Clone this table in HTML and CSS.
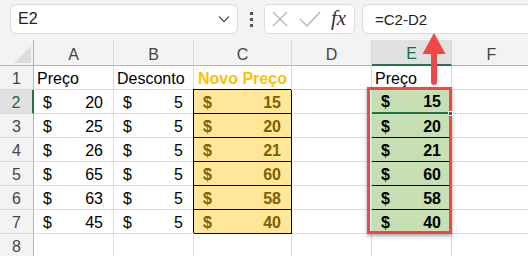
FILE: index.html
```html
<!DOCTYPE html>
<html>
<head>
<meta charset="utf-8">
<link rel="stylesheet" href="styles.css">
</head>
<body>
<div class="app">
  <div class="toolbar">
    <div class="namebox">
      <span>E2</span>
      <svg class="chev" width="12" height="8" viewBox="0 0 12 8"><path d="M1 1.5 L6 6.5 L11 1.5" fill="none" stroke="#555" stroke-width="1.3"/></svg>
    </div>
    <div class="dots"><i></i><i></i><i></i></div>
    <div class="fbtns">
      <svg width="16" height="16" viewBox="0 0 16 16"><path d="M1 1 L15 15 M15 1 L1 15" stroke="#b4b4b4" stroke-width="1.3" fill="none"/></svg>
      <svg width="22" height="16" viewBox="0 0 22 16"><path d="M1 8 L8 15 L21 1" stroke="#b4b4b4" stroke-width="1.3" fill="none"/></svg>
      <span class="fx">fx</span>
    </div>
    <div class="finput">=C2-D2</div>
  </div>

  <div class="sheet">
    <div class="ch corner"><svg width="17" height="17" viewBox="0 0 17 17"><polygon points="17,0 17,17 0,17" fill="#dcdcdc"/></svg></div>
    <div class="ch">A</div>
    <div class="ch">B</div>
    <div class="ch">C</div>
    <div class="ch">D</div>
    <div class="ch sel">E</div>
    <div class="ch">F</div>

    <div class="rh">1</div>
    <div class="c">Preço</div>
    <div class="c">Desconto</div>
    <div class="c hdr-y">Novo Preço</div>
    <div class="c"></div>
    <div class="c">Preço</div>
    <div class="c"></div>

    <div class="rh sel">2</div>
    <div class="c acc"><span>$</span><span>20</span></div>
    <div class="c acc"><span>$</span><span>5</span></div>
    <div class="c acc yel"><span>$</span><span>15</span></div>
    <div class="c"></div>
    <div class="c acc grn active"><span>$</span><span>15</span></div>
    <div class="c"></div>

    <div class="rh">3</div>
    <div class="c acc"><span>$</span><span>25</span></div>
    <div class="c acc"><span>$</span><span>5</span></div>
    <div class="c acc yel"><span>$</span><span>20</span></div>
    <div class="c"></div>
    <div class="c acc grn"><span>$</span><span>20</span></div>
    <div class="c"></div>

    <div class="rh">4</div>
    <div class="c acc"><span>$</span><span>26</span></div>
    <div class="c acc"><span>$</span><span>5</span></div>
    <div class="c acc yel"><span>$</span><span>21</span></div>
    <div class="c"></div>
    <div class="c acc grn"><span>$</span><span>21</span></div>
    <div class="c"></div>

    <div class="rh">5</div>
    <div class="c acc"><span>$</span><span>65</span></div>
    <div class="c acc"><span>$</span><span>5</span></div>
    <div class="c acc yel"><span>$</span><span>60</span></div>
    <div class="c"></div>
    <div class="c acc grn"><span>$</span><span>60</span></div>
    <div class="c"></div>

    <div class="rh">6</div>
    <div class="c acc"><span>$</span><span>63</span></div>
    <div class="c acc"><span>$</span><span>5</span></div>
    <div class="c acc yel"><span>$</span><span>58</span></div>
    <div class="c"></div>
    <div class="c acc grn"><span>$</span><span>58</span></div>
    <div class="c"></div>

    <div class="rh">7</div>
    <div class="c acc"><span>$</span><span>45</span></div>
    <div class="c acc"><span>$</span><span>5</span></div>
    <div class="c acc yel"><span>$</span><span>40</span></div>
    <div class="c"></div>
    <div class="c acc grn"><span>$</span><span>40</span></div>
    <div class="c"></div>

    <div class="rh">8</div>
    <div class="c"></div>
    <div class="c"></div>
    <div class="c"></div>
    <div class="c"></div>
    <div class="c"></div>
    <div class="c"></div>
  </div>

  <div class="redbox"></div>
  <div class="handle"></div>
  <svg class="arrow" width="28" height="58" viewBox="0 0 28 58">
    <line x1="14" y1="18" x2="14" y2="52" stroke="#ef4747" stroke-width="6" stroke-linecap="round"/>
    <polygon points="14,3 25.5,24 2.5,24" fill="#ef4747"/>
  </svg>
</div>
</body>
</html>
```

FILE: styles.css
```css
* { box-sizing: border-box; }
html, body { margin: 0; padding: 0; background: #ffffff; }
body { overflow: hidden; }

.app {
  position: relative;
  width: 528px;
  height: 256px;
  overflow: hidden;
  font-family: "Liberation Sans", Arial, sans-serif;
  color: #000;
}

.toolbar {
  height: 40px;
  background: #f3f3f3;
  display: flex;
  align-items: flex-start;
  padding: 4px 0 0 10px;
}
.toolbar > * { flex-shrink: 0; }

.namebox {
  width: 228px;
  height: 30px;
  background: #fff;
  border: 1px solid #dcdcdc;
  border-radius: 6px;
  display: flex;
  align-items: center;
  justify-content: space-between;
  padding: 0 7px 0 7px;
  font-size: 16px;
  color: #222;
}

.dots {
  width: 26px;
  height: 30px;
  display: flex;
  flex-direction: column;
  align-items: center;
  justify-content: center;
  gap: 3px;
}
.dots i {
  display: block;
  width: 3px;
  height: 3px;
  background: #555;
}

.fbtns {
  width: 91px;
  height: 30px;
  background: #fff;
  border: 1px solid #dcdcdc;
  border-radius: 6px;
  display: flex;
  align-items: center;
  padding-left: 7px;
  gap: 11px;
}
.fx {
  font-family: "Liberation Serif", serif;
  font-style: italic;
  font-size: 21px;
  color: #333;
  margin-left: -1px;
  line-height: 1;
  padding-bottom: 2px;
}

.finput {
  margin-left: 7px;
  width: 200px;
  height: 30px;
  background: #fff;
  border: 1px solid #dcdcdc;
  border-radius: 6px;
  display: flex;
  align-items: center;
  padding-left: 12px;
  font-size: 15px;
  color: #222;
}

.sheet {
  display: grid;
  grid-template-columns: 34px 80px 80px 98px 80px 80px 80px;
  grid-template-rows: 26px repeat(8, 24px);
  font-size: 16px;
  line-height: 16px;
}

.ch {
  background: #f3f3f3;
  border-right: 1px solid #d9d9d9;
  border-bottom: 1px solid #b5b5b5;
  display: flex;
  justify-content: center;
  align-items: center;
  padding-top: 4px;
  color: #444;
}
.ch.corner {
  border-right: 1px solid #b5b5b5;
  justify-content: flex-end;
  align-items: flex-end;
  padding: 0 2px 2px 0;
}
.ch.sel {
  background: #e1e1e1;
  color: #1d6b40;
  border-bottom: 2px solid #217346;
}

.rh {
  background: #f3f3f3;
  border-right: 1px solid #b5b5b5;
  border-bottom: 1px solid #d9d9d9;
  display: flex;
  justify-content: center;
  align-items: flex-end;
  padding-bottom: 2px;
  color: #444;
}
.rh.sel {
  background: #e1e1e1;
  color: #1d6b40;
  border-right: 2px solid #217346;
}

.c {
  border-right: 1px solid #dadada;
  border-bottom: 1px solid #dadada;
  display: flex;
  align-items: flex-end;
  padding: 0 3px 2px 3px;
  white-space: nowrap;
}
.acc {
  justify-content: space-between;
  padding: 0 10px 2px 9px;
}
.hdr-y {
  color: #ffc000;
  font-weight: bold;
  padding-left: 4px;
}
.yel {
  background: #ffe699;
  color: #7f6000;
  font-weight: bold;
  border-right: 1px solid #000;
  border-bottom: 1px solid #000;
  box-shadow: -1px -1px 0 #000;
}
.grn {
  background: #c6e0b4;
  font-weight: bold;
  border-bottom: 1px solid #000;
}
.grn.active {
  border-bottom: 2px solid #217346;
}

.redbox {
  position: absolute;
  left: 367px;
  top: 87px;
  width: 85px;
  height: 147px;
  border: 3px solid #ef4747;
  box-shadow: 0 2px 4px rgba(0, 0, 0, 0.35);
}
.handle {
  position: absolute;
  left: 448px;
  top: 111px;
  width: 5px;
  height: 5px;
  background: #217346;
  border: 1px solid #fff;
}
.arrow {
  position: absolute;
  left: 420px;
  top: 30px;
}
```
